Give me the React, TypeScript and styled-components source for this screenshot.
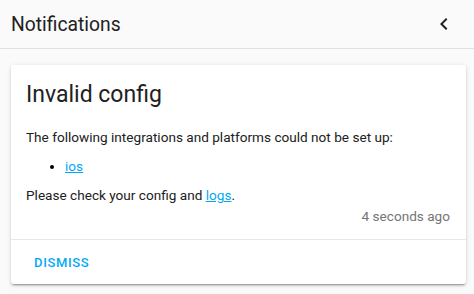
import styled, { createGlobalStyle } from 'styled-components'

const Global = createGlobalStyle`
  html, body {
    margin: 0;
    padding: 0;
    background: #fafafa;
    font-family: Roboto, "Noto Sans", sans-serif;
  }
`

const Drawer = styled.div`
  width: 474px;
  height: 294px;
  background: #fafafa;
  overflow: hidden;
`

const Header = styled.div`
  display: flex;
  align-items: center;
  justify-content: space-between;
  padding: 0 18px 0 11px;
  border-bottom: 1px solid #e0e0e0;
  box-sizing: border-box;
  height: 49px;
`

const Title = styled.div`
  font-size: 19.3px;
  font-weight: 400;
  color: #212121;
`

const BackButton = styled.button`
  width: 40px;
  height: 40px;
  border: none;
  background: none;
  padding: 0;
  display: flex;
  align-items: center;
  justify-content: center;
  margin-right: -8px;
  color: #212121;
`

const Content = styled.div`
  padding: 16px 8px 0 11px;
`

const Card = styled.div`
  background: #fff;
  border-radius: 3px;
  box-shadow: 0 2px 2px 0 rgba(0, 0, 0, 0.14), 0 1px 5px 0 rgba(0, 0, 0, 0.12),
    0 3px 1px -2px rgba(0, 0, 0, 0.2);
`

const CardBody = styled.div`
  padding: 14px 16px 13px 15px;
`

const CardTitle = styled.div`
  font-size: 23px;
  line-height: 32px;
  color: #212121;
  margin-bottom: 16px;
`

const Text = styled.p`
  margin: 0;
  font-size: 13.6px;
  line-height: 20px;
  color: #212121;
`

const List = styled.ul`
  margin: 9px 0 9px;
  padding-left: 39px;
  font-size: 13.6px;
  line-height: 20px;
`

const Link = styled.a`
  color: #03a9f4;
  text-decoration: underline;
`

const Time = styled.div`
  text-align: right;
  font-size: 13.6px;
  line-height: 20px;
  color: #757575;
  margin-top: 1px;
`

const Actions = styled.div`
  border-top: 1px solid #e8e8e8;
  padding: 4px 8px;
`

const DismissButton = styled.button`
  border: none;
  background: none;
  font-family: Roboto, sans-serif;
  font-size: 13px;
  font-weight: 500;
  letter-spacing: 0.05em;
  color: #03a9f4;
  padding: 0 8px;
  margin-left: 7px;
  height: 36px;
  text-transform: uppercase;
`

export default function App() {
  return (
    <Drawer>
      <Global />
      <Header>
        <Title>Notifications</Title>
        <BackButton>
          <svg width="24" height="24" viewBox="0 0 24 24">
            <path d="M15.41,16.58L10.83,12L15.41,7.41L14,6L8,12L14,18L15.41,16.58Z" fill="currentColor" />
          </svg>
        </BackButton>
      </Header>
      <Content>
        <Card>
          <CardBody>
            <CardTitle>Invalid config</CardTitle>
            <Text>The following integrations and platforms could not be set up:</Text>
            <List>
              <li>
                <Link href="#">ios</Link>
              </li>
            </List>
            <Text>
              Please check your config and <Link href="#">logs</Link>.
            </Text>
            <Time>4 seconds ago</Time>
          </CardBody>
          <Actions>
            <DismissButton>Dismiss</DismissButton>
          </Actions>
        </Card>
      </Content>
    </Drawer>
  )
}
